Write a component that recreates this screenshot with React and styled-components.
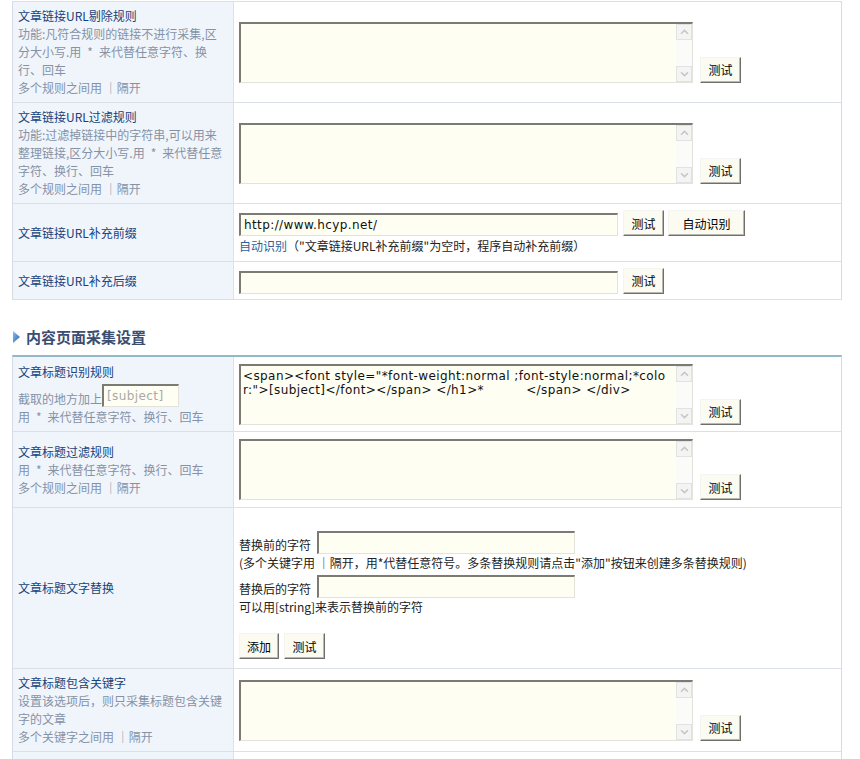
import React from 'react';
import styled, { createGlobalStyle } from 'styled-components';

const GlobalStyle = createGlobalStyle`
  html, body { margin: 0; padding: 0; background: #fff; }
  body {
    font-family: "Noto Sans CJK SC", "Noto Sans", sans-serif;
    font-size: 12px;
    color: #222;
  }
  * { box-sizing: border-box; }
`;

const Page = styled.div`
  padding: 1px 0 0 12px;
  width: 842px;
`;

const FormTable = styled.div`
  width: 830px;
  border-left: 1px solid #d6dce3;
  border-right: 1px solid #d6dce3;
  border-top: ${(p) => (p.$accent ? '2px solid #93b9c9' : '1px solid #dbe0e6')};
  border-bottom: ${(p) => (p.$open ? 'none' : '1px solid #dbe0e6')};
`;

const Row = styled.div`
  display: grid;
  grid-template-columns: 221px 1fr;
  height: ${(p) => p.$h}px;
  border-top: ${(p) => (p.$first ? 'none' : '1px solid #dbe0e6')};
`;

const LabelCell = styled.div`
  background: #f0f5fc;
  border-right: 1px solid #dbe2ea;
  padding: 0 5px;
  display: flex;
  flex-direction: column;
  justify-content: center;
  line-height: 18px;
`;

const Title = styled.div`
  color: #17427a;
  white-space: nowrap;
`;

const Desc = styled.div`
  color: #8592a5;
  white-space: nowrap;
`;

const ValueCell = styled.div`
  padding: ${(p) => (p.$pt ? `${p.$pt}px 5px 0` : '0 5px')};
  display: flex;
  flex-direction: column;
  justify-content: ${(p) => (p.$pt ? 'flex-start' : 'center')};
  align-items: flex-start;
  background: #fff;
`;

const AreaWithButton = styled.div`
  display: flex;
  align-items: flex-end;
  gap: 7px;
`;

const AreaFrame = styled.div`
  display: flex;
  width: 454px;
  height: 61px;
  background: #fefef3;
  border-top: 2px solid #7b7b73;
  border-left: 2px solid #7b7b73;
  border-right: 1px solid #e3e3db;
  border-bottom: 1px solid #e3e3db;
`;

const Area = styled.textarea`
  flex: 1;
  margin: 0;
  border: 0;
  outline: none;
  resize: none;
  overflow: hidden;
  background: transparent;
  padding: 3px 2px;
  font-family: "DejaVu Sans", Verdana, sans-serif;
  font-size: 12px;
  line-height: 14px;
  letter-spacing: 0.4px;
  color: #111;
`;

const ScrollBar = styled.div`
  width: 16px;
  display: flex;
  flex-direction: column;
  justify-content: space-between;
  background: #fbfbfa;
`;

const ScrollBtn = styled.div`
  width: 16px;
  height: 16px;
  border: 1px solid #e2e2e2;
  background: #f4f4f4;
  display: flex;
  align-items: center;
  justify-content: center;
`;

const Btn = styled.button`
  height: 26px;
  width: ${(p) => p.$w || 41}px;
  padding: 0;
  margin: 0;
  font-family: "Noto Sans CJK SC", sans-serif;
  font-size: 12px;
  color: #000;
  background: #fbfbf1;
  border: 1px solid;
  border-color: #f4f4f0 #6e6e6e #6e6e6e #f4f4f0;
  box-shadow: inset -1px -1px 0 #b9b9b1;
  cursor: pointer;
`;

const TextInput = styled.input`
  width: ${(p) => p.$w}px;
  height: ${(p) => p.$h || 23}px;
  margin: 0;
  padding: 0 3px;
  background: #fefef3;
  border-top: 2px solid #7b7b73;
  border-left: 2px solid #7b7b73;
  border-right: 1px solid #e3e3db;
  border-bottom: 1px solid #e3e3db;
  outline: none;
  font-family: "DejaVu Sans", Verdana, sans-serif;
  font-size: 12px;
  letter-spacing: 0.4px;
  color: ${(p) => (p.$muted ? '#a9a9a9' : '#111')};
`;

const InputRow = styled.div`
  display: flex;
  align-items: flex-end;
  gap: ${(p) => p.$gap || 5}px;
`;

const Hint = styled.div`
  line-height: 18px;
  color: #222;
  margin-top: ${(p) => p.$mt || 0}px;
  white-space: nowrap;
`;

const HintLink = styled.span`
  color: #2d5f9c;
`;

const SectionTitle = styled.div`
  height: 55px;
  display: flex;
  align-items: flex-end;
  gap: 6px;
  padding: 0 0 8px 1px;
  font-size: 15px;
  font-weight: bold;
  line-height: 20px;
  color: #3b4d70;
`;

const SubjectLine = styled.div`
  display: flex;
  align-items: flex-end;
  height: 27px;
  color: #8592a5;
  white-space: nowrap;
  & > input {
    margin-bottom: 1px;
  }
`;

const FieldLine = styled.div`
  display: flex;
  align-items: flex-end;
  gap: 6px;
  margin-top: ${(p) => p.$mt || 0}px;
  line-height: 18px;
  color: #222;
`;

const ButtonBar = styled.div`
  display: flex;
  gap: 5px;
  margin-top: 17px;
`;

function Chevron({ down }) {
  return (
    <svg width="9" height="6" viewBox="0 0 9 6">
      <path
        d={down ? 'M1 1.2 L4.5 4.6 L8 1.2' : 'M1 4.8 L4.5 1.4 L8 4.8'}
        fill="none"
        stroke="#c6c6c6"
        strokeWidth="1.5"
      />
    </svg>
  );
}

function Arrow() {
  return (
    <svg width="7" height="12" viewBox="0 0 7 12" style={{ marginBottom: 4 }}>
      <defs>
        <linearGradient id="ag" x1="0" y1="0" x2="1" y2="1">
          <stop offset="0" stopColor="#8cc0ec" />
          <stop offset="1" stopColor="#2565b8" />
        </linearGradient>
      </defs>
      <polygon points="0,0 7,6 0,12" fill="url(#ag)" />
    </svg>
  );
}

function RuleArea({ value = '' }) {
  return (
    <AreaWithButton>
      <AreaFrame>
        <Area defaultValue={value} spellCheck={false} />
        <ScrollBar>
          <ScrollBtn>
            <Chevron />
          </ScrollBtn>
          <ScrollBtn>
            <Chevron down />
          </ScrollBtn>
        </ScrollBar>
      </AreaFrame>
      <Btn type="button">测试</Btn>
    </AreaWithButton>
  );
}

const SP = '\u2002';
const titleRule =
  '<span><font style="*font-weight:normal ;font-style:normal;*colo\n' +
  'r:">[subject]</font></span> </h1>*          </span> </div>';

export default function App() {
  return (
    <>
      <GlobalStyle />
      <Page>
        <FormTable>
          <Row $h={100} $first>
            <LabelCell>
              <Title>文章链接URL剔除规则</Title>
              <Desc>功能:凡符合规则的链接不进行采集,区</Desc>
              <Desc>{`分大小写.用${SP}*${SP}来代替任意字符、换`}</Desc>
              <Desc>行、回车</Desc>
              <Desc>多个规则之间用 ｜隔开</Desc>
            </LabelCell>
            <ValueCell>
              <RuleArea />
            </ValueCell>
          </Row>
          <Row $h={101}>
            <LabelCell>
              <Title>文章链接URL过滤规则</Title>
              <Desc>功能:过滤掉链接中的字符串,可以用来</Desc>
              <Desc>{`整理链接,区分大小写.用${SP}*${SP}来代替任意`}</Desc>
              <Desc>字符、换行、回车</Desc>
              <Desc>多个规则之间用 ｜隔开</Desc>
            </LabelCell>
            <ValueCell>
              <RuleArea />
            </ValueCell>
          </Row>
          <Row $h={58}>
            <LabelCell>
              <Title>文章链接URL补充前缀</Title>
            </LabelCell>
            <ValueCell>
              <InputRow>
                <TextInput $w={379} defaultValue="http://www.hcyp.net/" />
                <Btn type="button">测试</Btn>
                <Btn type="button" $w={77} style={{ marginLeft: -1 }}>
                  自动识别
                </Btn>
              </InputRow>
              <Hint $mt={1}>
                <HintLink>自动识别</HintLink>（"文章链接URL补充前缀"为空时，程序自动补充前缀）
              </Hint>
            </ValueCell>
          </Row>
          <Row $h={38}>
            <LabelCell>
              <Title>文章链接URL补充后缀</Title>
            </LabelCell>
            <ValueCell>
              <InputRow>
                <TextInput $w={379} />
                <Btn type="button">测试</Btn>
              </InputRow>
            </ValueCell>
          </Row>
        </FormTable>

        <SectionTitle>
          <Arrow />
          内容页面采集设置
        </SectionTitle>

        <FormTable $accent $open>
          <Row $h={74} $first>
            <LabelCell>
              <Title>文章标题识别规则</Title>
              <SubjectLine>
                截取的地方加上
                <TextInput $w={77} $muted readOnly value="[subject]" />
              </SubjectLine>
              <Desc>{`用${SP}*${SP}来代替任意字符、换行、回车`}</Desc>
            </LabelCell>
            <ValueCell>
              <RuleArea value={titleRule} />
            </ValueCell>
          </Row>
          <Row $h={76}>
            <LabelCell>
              <Title>文章标题过滤规则</Title>
              <Desc>{`用${SP}*${SP}来代替任意字符、换行、回车`}</Desc>
              <Desc>多个规则之间用 ｜隔开</Desc>
            </LabelCell>
            <ValueCell>
              <RuleArea />
            </ValueCell>
          </Row>
          <Row $h={161}>
            <LabelCell>
              <Title>文章标题文字替换</Title>
            </LabelCell>
            <ValueCell $pt={23}>
              <FieldLine>
                替换前的字符
                <TextInput $w={258} />
              </FieldLine>
              <Hint>(多个关键字用 ｜隔开，用*代替任意符号。多条替换规则请点击"添加"按钮来创建多条替换规则)</Hint>
              <FieldLine $mt={3}>
                替换后的字符
                <TextInput $w={258} />
              </FieldLine>
              <Hint>可以用[string]来表示替换前的字符</Hint>
              <ButtonBar>
                <Btn type="button" $w={40}>
                  添加
                </Btn>
                <Btn type="button">测试</Btn>
              </ButtonBar>
            </ValueCell>
          </Row>
          <Row $h={83}>
            <LabelCell>
              <Title>文章标题包含关键字</Title>
              <Desc>设置该选项后，则只采集标题包含关键</Desc>
              <Desc>字的文章</Desc>
              <Desc>多个关键字之间用 ｜隔开</Desc>
            </LabelCell>
            <ValueCell>
              <RuleArea />
            </ValueCell>
          </Row>
          <Row $h={40}>
            <LabelCell />
            <ValueCell />
          </Row>
        </FormTable>
      </Page>
    </>
  );
}
